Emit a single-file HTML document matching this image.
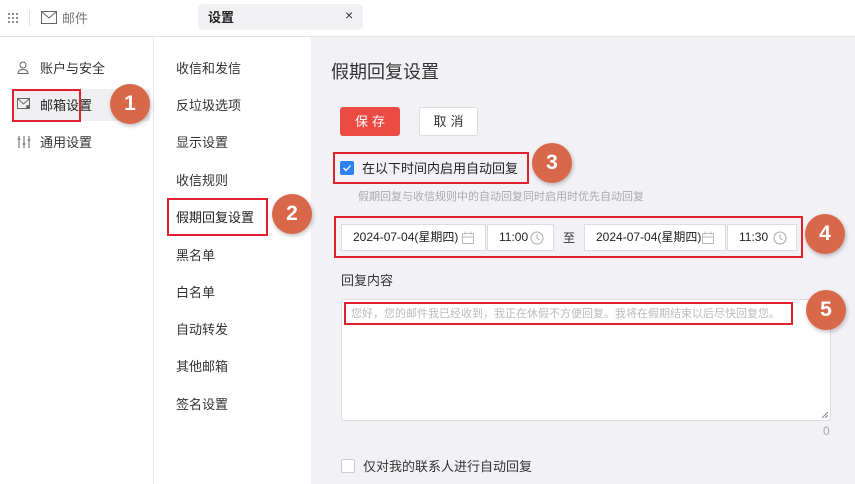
<!DOCTYPE html>
<html><head><meta charset="utf-8"><style>
*{margin:0;padding:0;box-sizing:border-box}
body{width:855px;height:484px;overflow:hidden;background:#fff;font-family:"Liberation Sans","Noto Sans CJK SC",sans-serif;color:#333;position:relative;font-size:13px}
.a{position:absolute;white-space:nowrap}
.c{position:absolute;width:40px;height:40px;border-radius:50%;background:#d9674a;color:#fff;font-size:21px;font-weight:bold;text-align:center;line-height:40px;box-shadow:1px 2px 4px rgba(0,0,0,.25)}
.rb{position:absolute;border:2px solid #e0212d}
.in{position:absolute;top:224px;height:27px;background:#fff;border:1px solid #dcdcdc;font-size:12px;color:#222;line-height:25px;padding-left:11px}
.in svg{position:absolute;top:6px}
.m{left:176px;font-size:13px;color:#333}
</style></head><body>
<div class="a" style="left:0;top:36px;width:855px;height:1px;background:#e4e4e4"></div>
<div class="a" style="left:7px;top:12px;width:12px;height:12px;background:radial-gradient(circle,#888 1px,transparent 1.3px) 0 0/4px 4px"></div>
<div class="a" style="left:29px;top:10px;width:1px;height:16px;background:#e0e0e0"></div>
<svg class="a" style="left:41px;top:11px" width="16" height="13"><rect x=".5" y=".5" width="15" height="12" fill="none" stroke="#666"/><path d="M1 1l7 6 7-6" fill="none" stroke="#666"/></svg>
<div class="a" style="left:62px;top:8px;font-size:13px;color:#777">邮件</div>
<div class="a" style="left:198px;top:4px;width:165px;height:26px;background:#f1f1f3;border-radius:5px"></div>
<div class="a" style="left:208px;top:7px;font-size:13px;font-weight:bold;color:#222">设置</div>
<div class="a" style="left:345px;top:7px;font-size:14px;color:#333">×</div>
<div class="a" style="left:153px;top:37px;width:1px;height:447px;background:#e6e6e6"></div>
<div class="a" style="left:311px;top:37px;width:544px;height:447px;background:#f2f2f6"></div>
<svg class="a" style="left:17px;top:61px" width="12" height="13"><circle cx="6" cy="4" r="3" fill="none" stroke="#666"/><path d="M1 12.5c0-3 2.5-4 5-4s5 1 5 4z" fill="none" stroke="#666"/></svg>
<div class="a" style="left:40px;top:58px;font-size:13px">账户与安全</div>
<div class="a" style="left:12px;top:89px;width:138px;height:32px;background:#efeff1"></div>
<svg class="a" style="left:17px;top:98px" width="14" height="12"><rect x=".5" y=".5" width="12" height="10" fill="none" stroke="#666"/><path d="M1 1l5.5 5 5.5-5" fill="none" stroke="#666"/><circle cx="11" cy="9" r="2" fill="#666"/></svg>
<div class="a" style="left:40px;top:95px;font-size:13px;color:#222">邮箱设置</div>
<div class="rb" style="left:12px;top:89px;width:69px;height:33px"></div>
<div class="c" style="left:110px;top:84px">1</div>
<svg class="a" style="left:17px;top:135px" width="14" height="13"><path d="M2 1v12M7 1v12M12 1v12M0.5 4h3M5.5 9h3M10.5 5h3" stroke="#666" fill="none"/></svg>
<div class="a" style="left:40px;top:132px;font-size:13px">通用设置</div>
<div class="a m" style="top:58px">收信和发信</div>
<div class="a m" style="top:95px">反垃圾选项</div>
<div class="a m" style="top:132px">显示设置</div>
<div class="a m" style="top:170px">收信规则</div>
<div class="a m" style="top:207px;color:#222">假期回复设置</div>
<div class="rb" style="left:167px;top:198px;width:101px;height:38px"></div>
<div class="c" style="left:272px;top:194px">2</div>
<div class="a m" style="top:245px">黑名单</div>
<div class="a m" style="top:282px">白名单</div>
<div class="a m" style="top:319px">自动转发</div>
<div class="a m" style="top:356px">其他邮箱</div>
<div class="a m" style="top:394px">签名设置</div>
<div class="a" style="left:331px;top:58px;font-size:18px;color:#333">假期回复设置</div>
<div class="a" style="left:340px;top:107px;width:60px;height:29px;background:#ea4b43;border-radius:3px;color:#fff;text-align:center;line-height:29px;font-size:13px;letter-spacing:4px;padding-left:4px">保存</div>
<div class="a" style="left:419px;top:107px;width:59px;height:29px;background:#fff;border:1px solid #ddd;border-radius:3px;color:#333;text-align:center;line-height:27px;font-size:13px;letter-spacing:4px;padding-left:4px">取消</div>
<div class="a" style="left:340px;top:161px;width:14px;height:14px;background:#2f80f0;border-radius:2px"></div>
<svg class="a" style="left:340px;top:161px" width="14" height="14"><path d="M3.5 7l2.5 2.5 4.5-5" fill="none" stroke="#fff" stroke-width="1.3"/></svg>
<div class="a" style="left:362px;top:158px;font-size:13px;color:#222">在以下时间内启用自动回复</div>
<div class="rb" style="left:333px;top:152px;width:196px;height:32px"></div>
<div class="c" style="left:532px;top:143px">3</div>
<div class="a" style="left:358px;top:188px;font-size:11px;color:#aaa">假期回复与收信规则中的自动回复同时启用时优先自动回复</div>
<div class="in" style="left:341px;width:145px">2024-07-04(星期四)<svg style="right:11px" width="12" height="13"><path d="M.5 2.5h11v10h-11zM.5 6h11M3 .5v3M9 .5v3" fill="none" stroke="#bbb"/></svg></div>
<div class="in" style="left:487px;width:67px">11:00<svg style="right:9px" width="14" height="14"><circle cx="7" cy="7" r="6" fill="none" stroke="#aaa"/><path d="M7 3.5V7l2.5 2" fill="none" stroke="#aaa"/></svg></div>
<div class="a" style="left:563px;top:229px;font-size:12px;color:#333">至</div>
<div class="in" style="left:584px;width:142px">2024-07-04(星期四)<svg style="right:11px" width="12" height="13"><path d="M.5 2.5h11v10h-11zM.5 6h11M3 .5v3M9 .5v3" fill="none" stroke="#bbb"/></svg></div>
<div class="in" style="left:727px;width:70px">11:30<svg style="right:9px" width="14" height="14"><circle cx="7" cy="7" r="6" fill="none" stroke="#aaa"/><path d="M7 3.5V7l2.5 2" fill="none" stroke="#aaa"/></svg></div>
<div class="rb" style="left:334px;top:216px;width:469px;height:42px"></div>
<div class="c" style="left:805px;top:214px">4</div>
<div class="a" style="left:341px;top:270px;font-size:13px;color:#333">回复内容</div>
<div class="a" style="left:341px;top:299px;width:490px;height:122px;background:#fff;border:1px solid #dcdcdc;border-radius:3px"></div>
<svg class="a" style="left:822px;top:412px" width="6" height="6"><path d="M0 6L6 0M3 6L6 3" stroke="#888"/></svg>
<div class="a" style="left:351px;top:305px;font-size:11px;color:#bbb">您好，您的邮件我已经收到，我正在休假不方便回复。我将在假期结束以后尽快回复您。</div>
<div class="rb" style="left:344px;top:302px;width:449px;height:23px"></div>
<div class="c" style="left:806px;top:290px">5</div>
<div class="a" style="left:823px;top:424px;font-size:12px;color:#aaa">0</div>
<div class="a" style="left:341px;top:459px;width:14px;height:14px;background:#fff;border:1px solid #ccc;border-radius:2px"></div>
<div class="a" style="left:363px;top:456px;font-size:13px;color:#333">仅对我的联系人进行自动回复</div>
</body></html>
